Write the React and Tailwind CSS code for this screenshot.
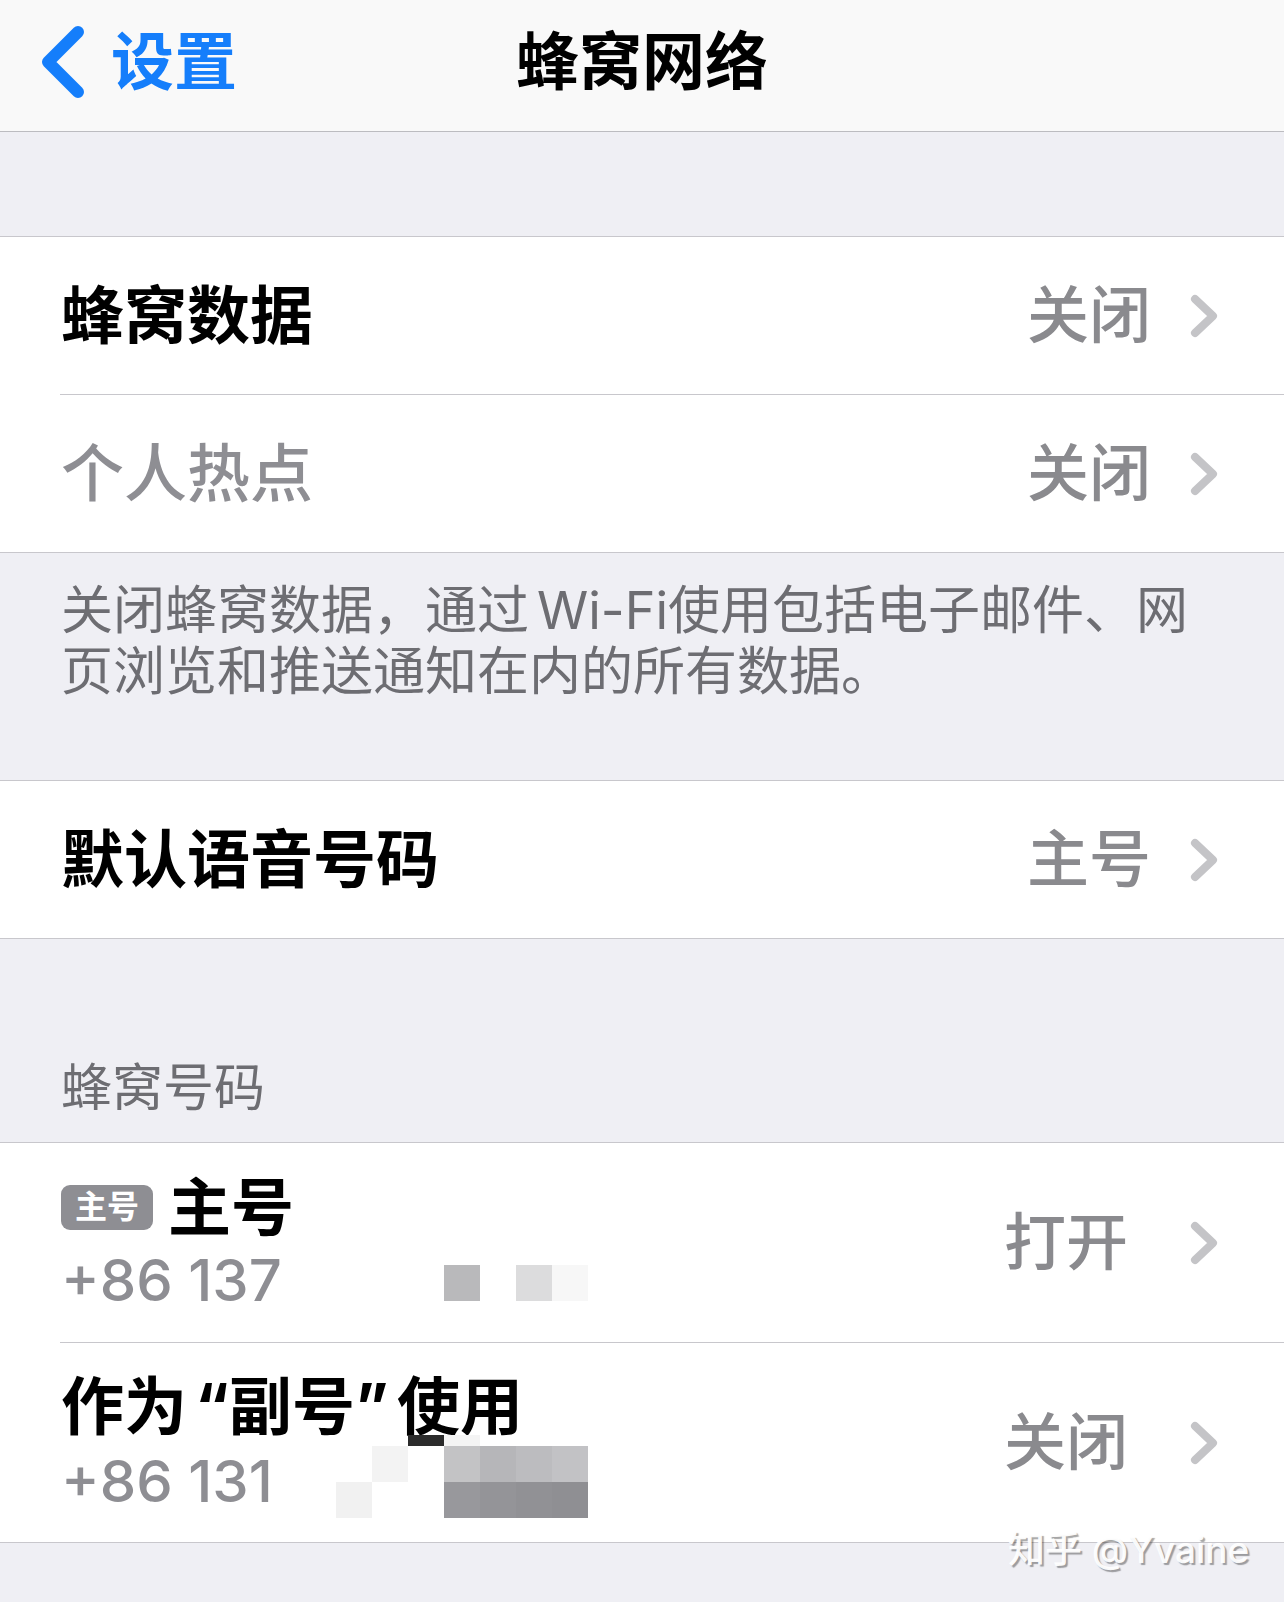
import React from 'react';

const Chevron = () => (
  <svg width="30" height="46" viewBox="0 0 30 46" className="shrink-0">
    <path d="M6 6 L24 23 L6 40" stroke="#c4c4c7" strokeWidth="8" fill="none" strokeLinecap="round" strokeLinejoin="round" />
  </svg>
);

const Row = ({ label, value, muted }) => (
  <div className="h-[157px] flex items-center pl-[61px] pr-[65px]">
    <span className={muted ? 'text-[63px] font-medium text-[#8e8e93]' : 'text-[63px] font-bold text-black'}>{label}</span>
    <span className="ml-auto text-[62px] font-medium text-[#8a8a8e]">{value}</span>
    <span className="ml-[38px] flex"><Chevron /></span>
  </div>
);

const App = () => {
  return (
    <div className="relative h-[1602px] overflow-hidden bg-[#efeff4] font-['Inter','Noto_Sans_CJK_SC',sans-serif]">
      {/* Nav bar */}
      <div className="h-[132px] bg-[#f9f9f9] border-b border-[#bcbcc0] grid grid-cols-[1fr_auto_1fr] items-center pb-[8px]">
        <div className="flex items-center pl-[40px]">
          <svg width="46" height="74" viewBox="0 0 46 74">
            <path d="M38 7 L8 37 L38 67" stroke="#157efb" strokeWidth="12" fill="none" strokeLinecap="round" strokeLinejoin="round" />
          </svg>
          <span className="ml-[25px] text-[63px] font-bold text-[#157efb] leading-none">设置</span>
        </div>
        <div className="text-[63px] font-bold text-black leading-none">蜂窝网络</div>
        <div />
      </div>

      <div className="h-[104px]" />

      {/* Cellular data */}
      <div className="bg-white border-y border-[#c8c7cc]">
        <Row label="蜂窝数据" value="关闭" />
        <div className="ml-[60px] h-px bg-[#c8c7cc]" />
        <Row label="个人热点" value="关闭" muted />
      </div>

      <div className="pt-[27px] pb-[78px] px-[61px] text-[52px] leading-[61px] text-[#6d6d72]">
        关闭蜂窝数据，通过<span className="ml-[8px]">Wi-Fi</span>使用包括电子邮件、网
        <br />
        页浏览和推送通知在内的所有数据。
      </div>

      <div className="bg-white border-y border-[#c8c7cc]">
        <div className="h-[157px] flex items-center pl-[61px] pr-[65px]">
          <span className="text-[63px] font-bold text-black">默认语音号码</span>
          <span className="ml-auto text-[62px] font-medium text-[#8a8a8e]">主号</span>
          <span className="ml-[38px] flex"><Chevron /></span>
        </div>
      </div>

      <div className="pt-[119px] pb-[24px] px-[61px] text-[51px] leading-[60px] text-[#6d6d72]">蜂窝号码</div>

      {/* Cellular numbers */}
      <div className="bg-white border-y border-[#c8c7cc]">
        <div className="relative h-[199px] flex items-center pl-[61px] pr-[65px]">
          <div className="flex flex-col">
            <div className="flex items-center h-[70px]">
              <span className="w-[92px] h-[45px] rounded-[9px] bg-[#8e8e93] text-white text-[32px] font-semibold flex items-center justify-center">主号</span>
              <span className="ml-[15px] text-[63px] font-bold text-black">主号</span>
            </div>
            <div className="mt-[5px] text-[58px] leading-[66px] font-medium text-[#8e8e93]">+86 137</div>
          </div>
          <span className="ml-auto text-[62px] font-medium text-[#8a8a8e]">打开</span>
          <span className="ml-[61px] flex"><Chevron /></span>
          {/* mosaic */}
          <div className="absolute top-[122px] left-[444px] w-[36px] h-[36px] bg-[#b9b9bb]" />
          <div className="absolute top-[122px] left-[516px] w-[36px] h-[36px] bg-[#dcdcdd]" />
          <div className="absolute top-[122px] left-[552px] w-[36px] h-[36px] bg-[#f7f7f7]" />
        </div>
        <div className="ml-[60px] h-px bg-[#c8c7cc]" />
        <div className="relative h-[199px] flex items-center pl-[61px] pr-[65px]">
          <div className="flex flex-col">
            <div className="flex items-center h-[70px] text-[63px] font-bold text-black">
              <span>作为</span>
              <span className="inline-block w-[42px] text-right">“</span>
              <span>副号</span>
              <span className="inline-block w-[42px] text-left">”</span>
              <span>使用</span>
            </div>
            <div className="mt-[7px] text-[58px] leading-[66px] font-medium text-[#8e8e93]">+86 131</div>
          </div>
          <span className="ml-auto text-[62px] font-medium text-[#8a8a8e]">关闭</span>
          <span className="ml-[61px] flex"><Chevron /></span>
          {/* mosaic */}
          <div className="absolute top-[92px] left-[408px] w-[36px] h-[11px] bg-[#2b2b2b]" />
          <div className="absolute top-[92px] left-[444px] w-[36px] h-[11px] bg-[#f4f4f4]" />
          <div className="absolute top-[103px] left-[372px] w-[36px] h-[36px] bg-[#f3f3f3]" />
          <div className="absolute top-[139px] left-[336px] w-[36px] h-[36px] bg-[#f1f1f1]" />
          <div className="absolute top-[103px] left-[444px] grid grid-cols-4">
            <div className="w-[36px] h-[36px] bg-[#c3c3c5]" />
            <div className="w-[36px] h-[36px] bg-[#b6b6b9]" />
            <div className="w-[36px] h-[36px] bg-[#bcbcbf]" />
            <div className="w-[36px] h-[36px] bg-[#c2c2c5]" />
            <div className="w-[36px] h-[36px] bg-[#98989c]" />
            <div className="w-[36px] h-[36px] bg-[#949498]" />
            <div className="w-[36px] h-[36px] bg-[#919195]" />
            <div className="w-[36px] h-[36px] bg-[#8f8f93]" />
          </div>
        </div>
      </div>

      {/* watermark */}
      <div className="absolute top-[1530px] left-[1008px] text-[37px] leading-[40px] font-medium text-white/95 [text-shadow:2px_2px_1px_rgba(0,0,0,0.35)] whitespace-nowrap">
        知乎 @Yvaine
      </div>
    </div>
  );
};

export default App;
